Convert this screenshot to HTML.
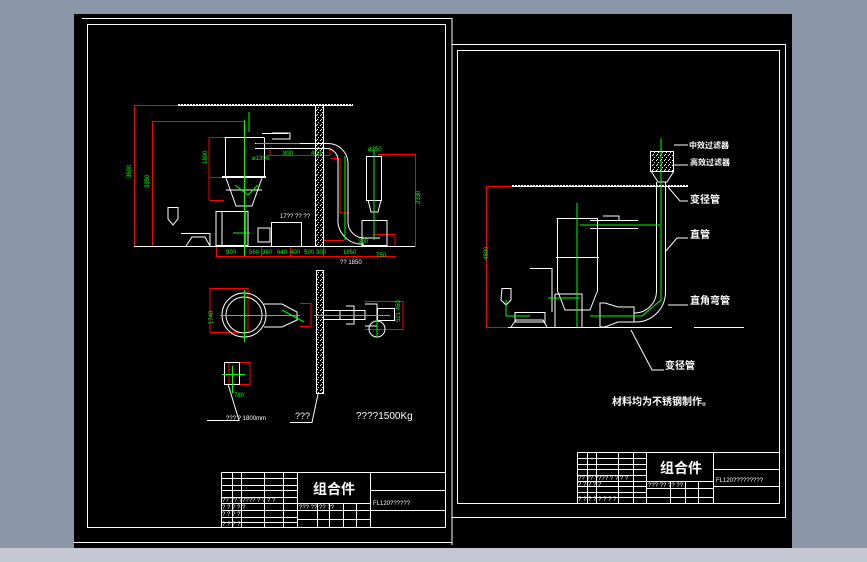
<!DOCTYPE html>
<html><head><meta charset="utf-8"><style>
html,body{margin:0;padding:0;background:#8a97a9;width:867px;height:562px;overflow:hidden}
svg{position:absolute;left:0;top:0}
text{font-family:"Liberation Sans","Noto Sans CJK SC",sans-serif}
.c{font-family:"Liberation Sans","Noto Sans CJK SC",sans-serif;font-weight:bold;fill:#fff}
.g{fill:#0f0;font-size:6px}
.w{fill:#fff;font-size:6px}
</style></head><body>
<svg width="867" height="562" viewBox="0 0 867 562" xmlns="http://www.w3.org/2000/svg">
<defs><pattern id="dots" width="4" height="5" patternUnits="userSpaceOnUse"><rect x="0" y="0" width="1" height="1" fill="#fff"/><rect x="2" y="2" width="1" height="1" fill="#fff"/><rect x="1" y="4" width="1" height="1" fill="#fff"/></pattern></defs>
<rect x="0" y="548" width="867" height="14" fill="#c3c8d2"/>
<rect x="74" y="14" width="718" height="534" fill="#000"/>
<g fill="none" stroke="#fff" stroke-width="1">
<path d="M82 18.5H452V545M82 18.5"/>
<path d="M87.5 24.5H445.5V527.5H87.5Z"/>
<path d="M74 542.5H452"/>
<path d="M452.5 44.5H785.5V517.5H452.5"/>
<path d="M457.5 50.5H779.5V503.5H457.5Z"/>
<path d="M221.5 472.5H445.5M221.5 472.5V527.5M297.5 472.5V527.5M370.5 472.5V527.5"/>
<path d="M221 478.5H297M221 485.5H297M221 490.5H297M221 497.5H297M221 503.5H297M221 510.5H297M221 517.5H297M221 522.5H297"/>
<path d="M232.5 472V527M241.5 472V527M264.5 472V527M283.5 472V527"/>
<path d="M297 503.5H370M297 510.5H370M297 519.5H370M317.5 503V527M329.5 503V527M343.5 503V527M356.5 503V527"/>
<path d="M370 490.5H445M370 510.5H445"/>
<path d="M577.5 452.5H779M577.5 452.5V503M646.5 452.5V503M713.5 452.5V503"/>
<path d="M577 458.5H646M577 464.5H646M577 469.5H646M577 475.5H646M577 481.5H646M577 486.5H646M577 492.5H646M577 497.5H646"/>
<path d="M587.5 452V503M596.5 452V503M618.5 452V503M633.5 452V503"/>
<path d="M646 481.5H713M646 488.5H713M646 497.5H713M670.5 481V503M685.5 481V503M698.5 481V503"/>
<path d="M713 469.5H779M713 486.5H779"/>
</g>
<text x="313" y="494" class="c" font-size="14">组合件</text>
<text x="373" y="505" class="w" font-size="8">FL120??????</text>
<text x="660" y="473" class="c" font-size="14">组合件</text>
<text x="716" y="482" class="w" font-size="7">FL120?????????</text>
<g class="w" font-size="5"><text x="222" y="502">?? ?? ????? ? ? ? ?</text><text x="222" y="509">? ?    ? ? ?</text><text x="222" y="516">? ?    ? ?</text><text x="222" y="526">? ?    ? ?</text><text x="299" y="509">???  ??  ??  ??</text>
<text x="578" y="480">?? ?? ???? ? ? ? ?</text><text x="578" y="486">? ?   ? ? ?</text><text x="578" y="501">? ?   ? ?     ?   ?  ?  ?</text><text x="648" y="487">???  ??  ??  ??</text></g>

<g fill="none" stroke="#f00" stroke-width="1">
<path d="M178 105.5H134.5V246.5H415.5V154.5H378"/>
<path d="M244 121.5H152.5V246"/>
<path d="M209 137.5H244M209 137.5V200M209 177.5H224M209 200.5H224"/>
<path d="M216.5 246V256.5H396M244.5 246V256.5M261.5 246V256.5M290.5 246V256.5M323.5 246V256.5"/>
<path d="M268 155.5H330V147M270 155.5V150M331 158.5H340V213H350"/>
<path d="M373 234.5H395V246M324 240.5H344"/>
<path d="M210 288.5H248V332.5H210Z"/>
<path d="M300 303.5H311V326.5H300M365 301.5H403V329.5H365"/>
<path d="M229 362.5H250V384.5H229Z"/>
</g>
<rect x="316" y="106" width="7" height="140" fill="url(#dots)"/>
<rect x="317" y="271" width="6" height="122" fill="url(#dots)"/>
<rect x="651" y="152" width="22" height="19" fill="url(#dots)"/>
<g fill="none" stroke="#fff" stroke-width="1">
<path d="M178 104.5H353" stroke-dasharray="2 1"/>
<path d="M178 105.5H353"/>
<rect x="315.5" y="105.5" width="8" height="141"/>
<rect x="316.5" y="270.5" width="7" height="123"/>
<path d="M224.5 137.5H264.5M225.5 138V177M264.5 138V177M222 177.5H266M222 176.5H266M226 178L236 206H252L262 178M226 190H262"/>
<path d="M216 211.5H248V245.5H216ZM222 212V245M245 212V245"/>
<path d="M255 143.5H328M255 148.5H328M288 133.5H262M272 133H290V139H272"/>
<path d="M328 143.5A20 20 0 0 1 348 163V223A16 16 0 0 0 364 238H380M328 148.5A12 12 0 0 1 338 160V218A24 24 0 0 0 364 244"/>
<rect x="366.5" y="156.5" width="15" height="44"/>
<path d="M368 200L371 212H378L381 200M362 220.5H387V245.5H362Z"/>
<path d="M168 207.5H178V219L173 225L168 219Z"/>
<path d="M181 233.5H210V246M186 246L192 237H205L210 246"/>
<rect x="271.5" y="222.5" width="30" height="24"/>
<path d="M258 228H270V242H258Z"/>
<path d="M134 246.5H415"/>
<circle cx="244" cy="315" r="22"/><circle cx="244" cy="315" r="18"/>
<path d="M264 304H282L297 312V320L282 327H264"/>
<path d="M323 310.5H340V319.5H323M340 310.5H365V319.5H340"/>
<path d="M346 306H354V324H346M365 304H377V326H365"/>
<circle cx="377" cy="329" r="8"/>
<rect x="377.5" y="308.5" width="17" height="12"/>
<rect x="224.5" y="362.5" width="15" height="22"/>
<path d="M207 420.5H239L228 384"/>
<path d="M290 422.5H312L318 394"/>
</g>
<g fill="none" stroke="#0f0" stroke-width="1">
<path d="M244.5 120V256M249 112V132M233 233H250M256 143.5H300M345 156V240M374 150V240M235 185L248 195L258 185"/>
<path d="M220 315.5H300M244.5 290V342M282 310L304 322M314 315.5H390M377 320V338"/>
<path d="M222 374.5H245M232.5 366V393"/>
</g>
<g class="g" font-size="6"><text x="252" y="160">ø1300</text><text x="283" y="155">800</text><text x="311" y="155">400</text>
<text x="226" y="254">900</text><text x="249" y="254">560</text><text x="262" y="254">360</text><text x="277" y="254">640</text><text x="290" y="254">400</text><text x="304" y="254">500</text><text x="316" y="254">300</text><text x="343" y="254">1850</text><text x="376" y="257">750</text>
<text x="368" y="151">ø350</text><text x="358" y="243">300</text>
<text x="131" y="178" transform="rotate(-90 131 178)">3600</text><text x="149" y="188" transform="rotate(-90 149 188)">3350</text>
<text x="207" y="164" transform="rotate(-90 207 164)">1800</text><text x="420" y="204" transform="rotate(-90 420 204)">2330</text>
<text x="213" y="324" transform="rotate(-90 213 324)">1740</text><text x="400" y="322" transform="rotate(-90 400 322)">521 450</text>
<text x="234" y="397">780</text></g>
<g class="w" font-size="6"><text x="280" y="218">17?? ?? ??</text><text x="340" y="264">?? 1850</text><text x="226" y="420">??? ? 1800mm</text></g>
<text x="295" y="419" fill="#fff" font-size="9">???</text>
<text x="356" y="419" fill="#fff" font-size="10">????1500Kg</text>

<g fill="none" stroke="#f00"><path d="M512 186.5H486.5V327.5H508"/></g>
<g fill="none" stroke="#fff" stroke-width="1">
<path d="M512 185.5H688" stroke-dasharray="2 1"/>
<path d="M512 186.5H688"/>
<path d="M508 327.5H672M694 327.5H744"/>
<rect x="650.5" y="151.5" width="23" height="20"/>
<path d="M651 171L658 182H667L674 171"/>
<path d="M656.5 182V292A22 22 0 0 1 634 313M665.5 182V292A30 30 0 0 1 634 322"/>
<path d="M600 303H605L618 307H634V322H618L605 327H600Z"/>
<path d="M556.5 218.5H598M557.5 218V292M597.5 218V292M556 257.5H599M558 292L565 310H590L597 292"/>
<path d="M590 220.5H638M590 228.5H638M603 216H619V221"/>
<path d="M502 288.5H511V300L506 305L501 300Z"/>
<path d="M515 312.5H545V322H515ZM511 327L516 320H543L547 327"/>
<path d="M530 268.5H552V312"/>
<path d="M555 294H582V327M555 294V327"/>
<path d="M674 145H688M674 165H688M668 187L680 201H688M665 252L677 238H688M668 305H688M631 330L652 370H664"/>
</g>
<g fill="none" stroke="#0f0"><path d="M577 203V327M661 138V300L642 316H590M580 225H660M506 300V316H530M548 298H580"/></g>
<text x="488" y="260" class="g" transform="rotate(-90 488 260)">4800</text>
<g class="c" font-size="8"><text x="689" y="148">中效过滤器</text><text x="690" y="165">高效过滤器</text></g>
<g class="c" font-size="10"><text x="690" y="203">变径管</text><text x="690" y="238">直管</text><text x="690" y="304">直角弯管</text><text x="665" y="369">变径管</text><text x="612" y="405">材料均为不锈钢制作。</text></g>
</svg>
</body></html>
